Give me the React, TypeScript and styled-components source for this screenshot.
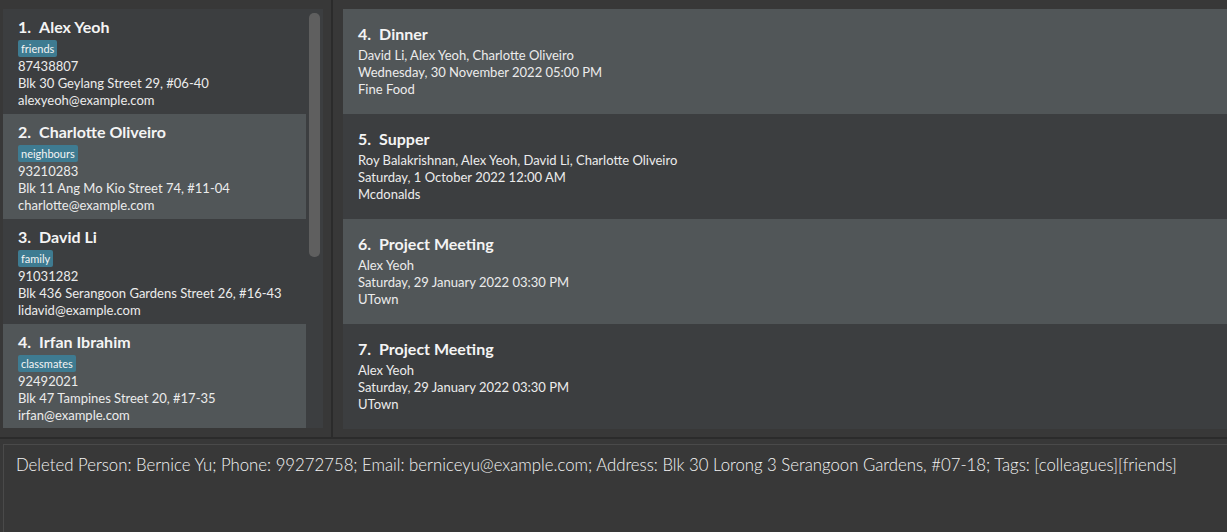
import React from "react";
import styled, { createGlobalStyle } from "styled-components";

const Global = createGlobalStyle`
  html, body { margin: 0; padding: 0; background: #383838; }
  * { box-sizing: border-box; }
`;

const Window = styled.div`
  width: 1227px;
  height: 532px;
  background: #383838;
  display: flex;
  flex-direction: column;
  font-family: "Lato", "Open Sans", sans-serif;
  color: #f2f2f2;
  overflow: hidden;
`;

const TopSplit = styled.div`
  display: flex;
  height: 437px;
`;

const LeftPane = styled.div`
  width: 331px;
  padding: 9px 8px 9px 3px;
  display: flex;
`;

const ListView = styled.div`
  flex: 1;
  display: flex;
  background: #3c3e40;
  overflow: hidden;
`;

const CardColumn = styled.div`
  width: 303px;
  display: flex;
  flex-direction: column;
`;

const ScrollTrack = styled.div`
  flex: 1;
  padding: 4px 3px 0 3px;
`;

const ScrollThumb = styled.div`
  height: 244px;
  background: #5f5f5f;
  border-radius: 5px;
`;

const VDivider = styled.div`
  width: 2px;
  background: #2b2b2b;
`;

const RightPane = styled.div`
  flex: 1;
  padding: 9px 0 10px 10px;
  display: flex;
  flex-direction: column;
`;

const Card = styled.div<{ $alt: boolean }>`
  height: 105px;
  flex-shrink: 0;
  background: ${(p) => (p.$alt ? "#515658" : "#3c3e40")};
  padding: 7px 10px 0 15px;
  display: flex;
  flex-direction: column;
`;

const Title = styled.div`
  font-size: 16px;
  font-weight: 700;
  line-height: 22px;
  color: #f4f4f4;
  white-space: nowrap;
  margin-bottom: 2px;
`;

const Index = styled.span`
  display: inline-block;
  margin-right: 8px;
`;

const Tag = styled.span`
  align-self: flex-start;
  background: #3e7b91;
  color: #f4f4f4;
  font-size: 11px;
  line-height: 17px;
  padding: 0 3px;
  border-radius: 2px;
  margin-bottom: 1px;
`;

const Line = styled.div`
  font-size: 13px;
  line-height: 17px;
  white-space: nowrap;
  color: #ececec;
`;

const HDivider = styled.div`
  height: 2px;
  background: #2b2b2b;
`;

const ResultArea = styled.div`
  flex: 1;
  padding: 5px 0 0 3px;
  display: flex;
`;

const ResultBox = styled.div`
  flex: 1;
  border: 1px solid #4a4a4a;
  border-right: none;
  border-bottom: none;
  padding: 9px 12px;
  font-size: 16.75px;
  font-weight: 300;
  line-height: 22px;
  color: #f4f4f4;
  white-space: nowrap;
`;

const EventCard = styled(Card)`
  padding-top: 14px;
`;

const persons = [
  { name: "Alex Yeoh", tag: "friends", phone: "87438807", address: "Blk 30 Geylang Street 29, #06-40", email: "alexyeoh@example.com" },
  { name: "Charlotte Oliveiro", tag: "neighbours", phone: "93210283", address: "Blk 11 Ang Mo Kio Street 74, #11-04", email: "charlotte@example.com" },
  { name: "David Li", tag: "family", phone: "91031282", address: "Blk 436 Serangoon Gardens Street 26, #16-43", email: "lidavid@example.com" },
  { name: "Irfan Ibrahim", tag: "classmates", phone: "92492021", address: "Blk 47 Tampines Street 20, #17-35", email: "irfan@example.com" },
];

const events = [
  { n: 4, title: "Dinner", people: "David Li, Alex Yeoh, Charlotte Oliveiro", date: "Wednesday, 30 November 2022 05:00 PM", place: "Fine Food" },
  { n: 5, title: "Supper", people: "Roy Balakrishnan, Alex Yeoh, David Li, Charlotte Oliveiro", date: "Saturday, 1 October 2022 12:00 AM", place: "Mcdonalds" },
  { n: 6, title: "Project Meeting", people: "Alex Yeoh", date: "Saturday, 29 January 2022 03:30 PM", place: "UTown" },
  { n: 7, title: "Project Meeting", people: "Alex Yeoh", date: "Saturday, 29 January 2022 03:30 PM", place: "UTown" },
];

export default function App() {
  return (
    <Window>
      <Global />
      <TopSplit>
        <LeftPane>
          <ListView>
            <CardColumn>
              {persons.map((p, i) => (
                <Card key={p.name} $alt={i % 2 === 1}>
                  <Title>
                    <Index>{i + 1}.</Index>
                    {p.name}
                  </Title>
                  <Tag>{p.tag}</Tag>
                  <Line>{p.phone}</Line>
                  <Line>{p.address}</Line>
                  <Line>{p.email}</Line>
                </Card>
              ))}
            </CardColumn>
            <ScrollTrack>
              <ScrollThumb />
            </ScrollTrack>
          </ListView>
        </LeftPane>
        <VDivider />
        <RightPane>
          {events.map((e, i) => (
            <EventCard key={e.n} $alt={i % 2 === 0}>
              <Title>
                <Index>{e.n}.</Index>
                {e.title}
              </Title>
              <Line>{e.people}</Line>
              <Line>{e.date}</Line>
              <Line>{e.place}</Line>
            </EventCard>
          ))}
        </RightPane>
      </TopSplit>
      <HDivider />
      <ResultArea>
        <ResultBox>
          Deleted Person: Bernice Yu; Phone: 99272758; Email: berniceyu@example.com; Address: Blk 30 Lorong 3 Serangoon Gardens, #07-18; Tags: [colleagues][friends]
        </ResultBox>
      </ResultArea>
    </Window>
  );
}
